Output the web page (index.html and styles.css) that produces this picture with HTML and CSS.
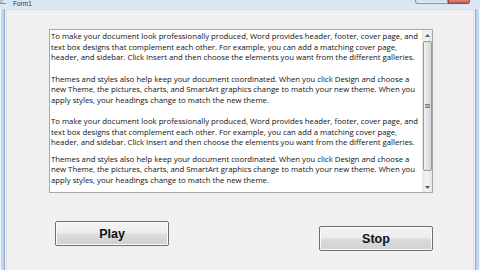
FILE: index.html
```html
<!DOCTYPE html>
<html>
<head>
<meta charset="utf-8">
<link rel="stylesheet" href="styles.css">
</head>
<body>
<div class="window">
  <div class="titlebar">
    <div class="title">
      <span class="app-icon"></span>
      <span class="title-text">Form1</span>
    </div>
    <div class="caption-buttons">
      <span class="cap-minmax"></span>
      <span class="cap-close"></span>
    </div>
  </div>
  <div class="frame">
    <div class="frame-left"></div>
    <div class="client">
      <div class="textbox">
        <div class="text">
          <p class="gap-line">To make your document look professionally produced, Word provides header, footer, cover page, and<br>text box designs that complement each other. For example, you can add a matching cover page,<br>header, and sidebar. Click Insert and then choose the elements you want from the different galleries.</p>
          <p class="gap-line">Themes and styles also help keep your document coordinated. When you click Design and choose a<br>new Theme, the pictures, charts, and SmartArt graphics change to match your new theme. When you<br>apply styles, your headings change to match the new theme.</p>
          <p class="gap-space">To make your document look professionally produced, Word provides header, footer, cover page, and<br>text box designs that complement each other. For example, you can add a matching cover page,<br>header, and sidebar. Click Insert and then choose the elements you want from the different galleries.</p>
          <p>Themes and styles also help keep your document coordinated. When you click Design and choose a<br>new Theme, the pictures, charts, and SmartArt graphics change to match your new theme. When you<br>apply styles, your headings change to match the new theme.</p>
        </div>
        <div class="scrollbar">
          <div class="sb-arrow">
            <svg width="5" height="3" viewBox="0 0 5 3"><path d="M0 3 L2.5 0 L5 3 Z" fill="#555"/></svg>
          </div>
          <div class="sb-track">
            <div class="sb-thumb">
              <svg width="5" height="4" viewBox="0 0 5 4"><path d="M0 0.5 H5 M0 2 H5 M0 3.5 H5" stroke="#666" stroke-width="0.8"/></svg>
            </div>
          </div>
          <div class="sb-arrow">
            <svg width="5" height="3" viewBox="0 0 5 3"><path d="M0 0 L2.5 3 L5 0 Z" fill="#555"/></svg>
          </div>
        </div>
      </div>
      <div class="buttons">
        <button class="btn">Play</button>
        <button class="btn btn-stop">Stop</button>
      </div>
    </div>
    <div class="frame-right"></div>
  </div>
</div>
</body>
</html>
```

FILE: styles.css
```css
html, body {
  margin: 0;
  padding: 0;
}
body {
  font-family: "Open Sans", "Noto Sans", sans-serif;
  background: #dce7f4;
}
.window {
  width: 480px;
  height: 270px;
  display: flex;
  flex-direction: column;
  background: #d6e3f2;
  overflow: hidden;
}
.titlebar {
  height: 9px;
  flex: none;
  display: flex;
  justify-content: space-between;
  align-items: flex-start;
  background: linear-gradient(#d9e5f3, #dde8f5);
}
.title {
  display: flex;
  align-items: flex-start;
  gap: 7px;
}
.app-icon {
  width: 6px;
  height: 4px;
  background: linear-gradient(90deg, #a7b4c6, #eef3f8);
  border-bottom: 1px solid #7e8ea6;
  box-sizing: border-box;
}
.title-text {
  font-family: "Liberation Sans", sans-serif;
  font-size: 6.5px;
  line-height: 7px;
  color: #333;
}
.caption-buttons {
  display: flex;
  margin-right: 10px;
}
.cap-minmax {
  width: 33px;
  height: 4px;
  box-sizing: border-box;
  border: 1px solid #8597b2;
  border-top: none;
  border-radius: 0 0 0 3px;
  background: linear-gradient(#cfdced, #e4ecf6);
}
.cap-close {
  width: 22px;
  height: 4px;
  box-sizing: border-box;
  border: 1px solid #8b4a4a;
  border-top: none;
  border-radius: 0 0 3px 0;
  background: linear-gradient(#d98a7d, #c8564a);
}
.frame {
  flex: 1;
  display: flex;
}
.frame-left {
  width: 7px;
  flex: none;
  background: linear-gradient(90deg, #eef4fb 0, #eef4fb 1px, #c7d9ef 1px, #bcd1ec 4px, #8fa8c8 4px, #8fa8c8 5px, #f4f7fb 5px, #f4f7fb 6px, #dadfe6 6px);
}
.frame-right {
  width: 7px;
  flex: none;
  background: linear-gradient(90deg, #dadfe6 0, #dadfe6 1px, #f4f7fb 1px, #f4f7fb 2px, #8fa8c8 2px, #8fa8c8 3px, #bcd1ec 3px, #c7d9ef 6px, #eef4fb 6px);
}
.client {
  flex: 1;
  background: #f0f0f0;
  border-top: 1px solid #dadfe6;
  padding: 19px 0 0 42px;
}
.textbox {
  width: 384px;
  height: 164px;
  box-sizing: border-box;
  border: 1px solid #a5a8ad;
  background: #fff;
  display: flex;
}
.text {
  flex: 1;
  padding: 1px 0 0 1px;
  font-size: 7.75px;
  line-height: 10.5px;
  color: #111;
  white-space: nowrap;
  overflow: hidden;
}
.text p {
  margin: 0;
}
.text p.gap-line {
  margin-bottom: 11px;
}
.text p.gap-space {
  margin-bottom: 6px;
}
.scrollbar {
  width: 10px;
  flex: none;
  display: flex;
  flex-direction: column;
  background: linear-gradient(90deg, #e6e6e6, #f4f4f4 50%, #e6e6e6);
}
.sb-arrow {
  height: 10px;
  display: flex;
  align-items: center;
  justify-content: center;
}
.sb-track {
  flex: 1;
  padding: 1px 0 11px;
  display: flex;
}
.sb-thumb {
  flex: 1;
  margin: 0 0.5px;
  border: 1px solid #9b9b9b;
  border-radius: 2px;
  background: linear-gradient(90deg, #f3f3f3, #e4e4e4 50%, #d6d6d6);
  display: flex;
  align-items: center;
  justify-content: center;
}
.buttons {
  width: 384px;
  display: flex;
  justify-content: space-between;
  align-items: flex-start;
  margin-top: 28px;
  padding-left: 6px;
  box-sizing: border-box;
}
.btn {
  width: 114px;
  height: 25px;
  box-sizing: border-box;
  border: 1px solid #707070;
  border-radius: 2px;
  background: linear-gradient(#f3f3f3, #ececec 48%, #dcdcdc 52%, #d0d0d0);
  box-shadow: inset 0 0 0 1px #fcfcfc;
  font-family: "Liberation Sans", Arial, sans-serif;
  font-weight: bold;
  font-size: 12.5px;
  color: #111;
  padding: 0;
  margin: 0;
}
.btn-stop {
  margin-top: 5px;
}
```
